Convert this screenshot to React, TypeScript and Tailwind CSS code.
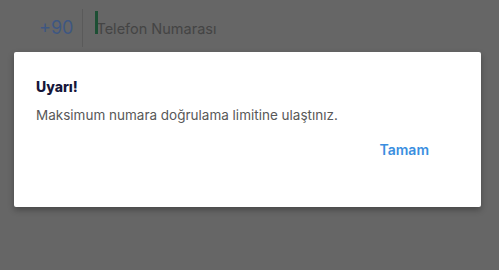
export default function App() {
  return (
    <div className="w-[499px] h-[270px] bg-[#666666] overflow-hidden font-['Inter','Liberation_Sans',sans-serif]">
      {/* dimmed phone input behind the dialog */}
      <div className="flex items-center h-[42px] mt-[7px] pl-[39px]">
        <span className="text-[18px] text-[#3e5782] leading-none">+90</span>
        <div className="w-px h-[38px] bg-[#5a5a5a] ml-[9px]"></div>
        <div className="relative ml-[13px]">
          <span className="absolute left-[-1px] top-[-5px] w-[3px] h-[23px] bg-[#1d4f34]"></span>
          <span className="text-[14.5px] text-[#444444] leading-none">Telefon Numarası</span>
        </div>
      </div>

      <div className="ml-[14px] mt-[3px] w-[467px] h-[155px] bg-white rounded-[2px] shadow-[0_3px_6px_rgba(0,0,0,0.3)] flex flex-col pl-[22px] pr-[52px] pt-[26px]">
        <h2 className="text-[14px] font-extrabold text-[#16163a] leading-[18px]">Uyarı!</h2>
        <p className="mt-[10px] text-[13.5px] text-[#585858] leading-[18px]">
          Maksimum numara doğrulama limitine ulaştınız.
        </p>
        <div className="flex justify-end mt-[17px]">
          <button className="text-[14px] font-semibold text-[#3a8ee0] leading-[18px]">Tamam</button>
        </div>
      </div>
    </div>
  );
}
